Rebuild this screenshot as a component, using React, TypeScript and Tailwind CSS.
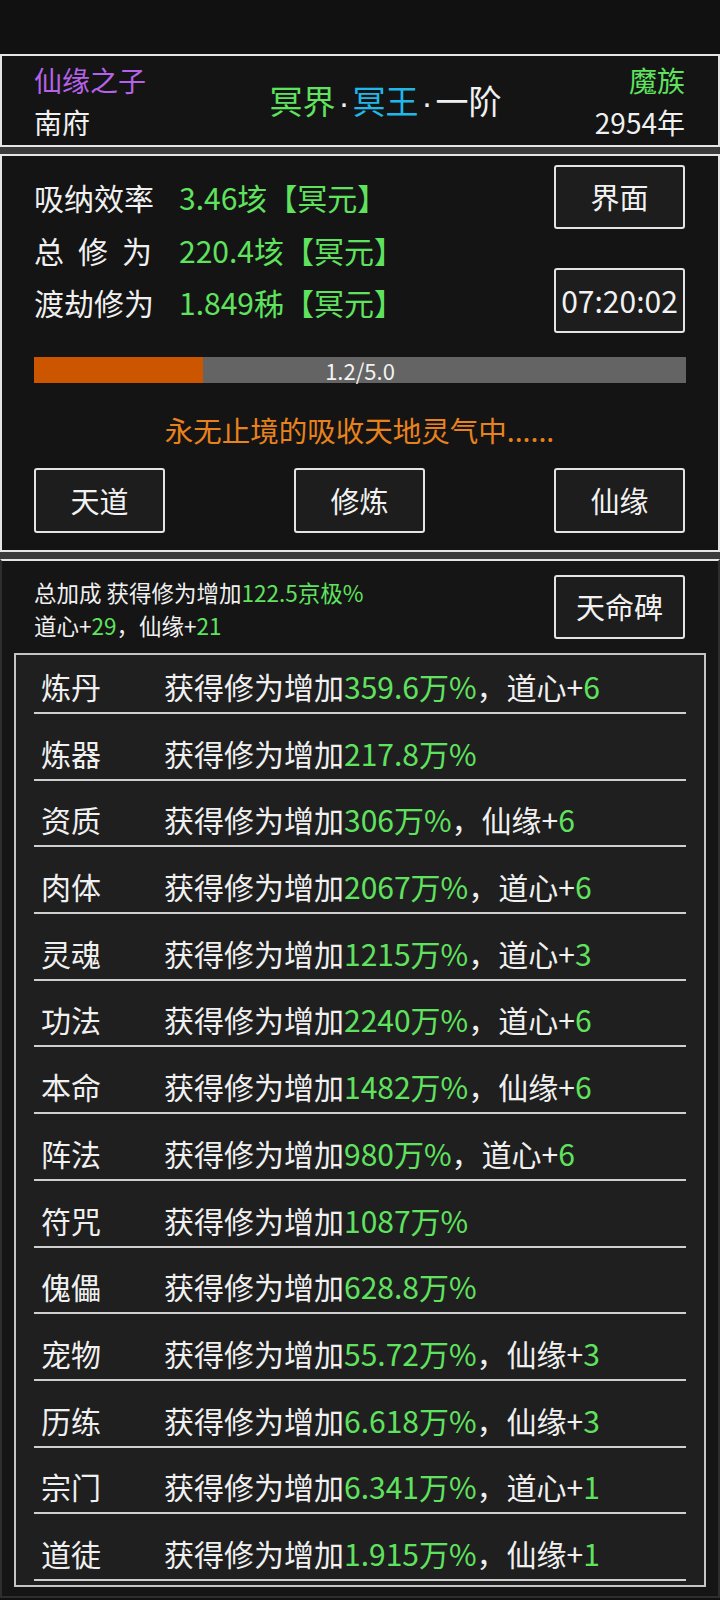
import React from "react";

const G = "text-[#5fe35f]";

type Row = { k: string; v: string; tail?: string; n?: string };

const rows: Row[] = [
  { k: "炼丹", v: "359.6万%", tail: "，道心+", n: "6" },
  { k: "炼器", v: "217.8万%" },
  { k: "资质", v: "306万%", tail: "，仙缘+", n: "6" },
  { k: "肉体", v: "2067万%", tail: "，道心+", n: "6" },
  { k: "灵魂", v: "1215万%", tail: "，道心+", n: "3" },
  { k: "功法", v: "2240万%", tail: "，道心+", n: "6" },
  { k: "本命", v: "1482万%", tail: "，仙缘+", n: "6" },
  { k: "阵法", v: "980万%", tail: "，道心+", n: "6" },
  { k: "符咒", v: "1087万%" },
  { k: "傀儡", v: "628.8万%" },
  { k: "宠物", v: "55.72万%", tail: "，仙缘+", n: "3" },
  { k: "历练", v: "6.618万%", tail: "，仙缘+", n: "3" },
  { k: "宗门", v: "6.341万%", tail: "，道心+", n: "1" },
  { k: "道徒", v: "1.915万%", tail: "，仙缘+", n: "1" },
];

function Btn({ children, className = "" }: { children: React.ReactNode; className?: string }) {
  return (
    <div
      className={
        "w-[131px] shrink-0 flex items-center justify-center border-2 border-[#e4e4e4] rounded-[3px] bg-[#1d1d1d] text-[#f2f2f2] " +
        className
      }
    >
      {children}
    </div>
  );
}

function Dot() {
  return <span className="font-['Liberation_Sans',sans-serif] mx-[3px]">·</span>;
}

export default function App() {
  return (
    <div className="w-[720px] h-[1600px] bg-[#111111] text-[#f0f0f0] font-['Noto_Sans_CJK_SC','Noto_Sans',sans-serif] overflow-hidden">
      <div className="h-[54px] bg-[#111111]" />

      {/* Panel 1 */}
      <div className="border-2 border-[#e6e6e6] bg-[#141414] pl-[32px] pr-[33px] pt-[3px] pb-[2px] flex items-center">
        <div className="w-[150px] shrink-0 text-[28px] leading-[42px]">
          <div className="text-[#b562e8]">仙缘之子</div>
          <div>南府</div>
        </div>
        <div className="flex-1 pl-[52px] text-center text-[33px] leading-[42px] whitespace-nowrap">
          <span className="text-[#5fe35f]">冥界</span>
          <Dot />
          <span className="text-[#21b8e8]">冥王</span>
          <Dot />
          <span>一阶</span>
        </div>
        <div className="w-[150px] shrink-0 text-[28px] leading-[42px] text-right">
          <div className="text-[#5fe35f]">魔族</div>
          <div>2954年</div>
        </div>
      </div>

      <div className="h-[7px] bg-[#3b3b3b]" />

      {/* Panel 2 */}
      <div className="border-2 border-[#e6e6e6] bg-[#141414] pl-[32px] pr-[33px] pb-[17px]">
        <div className="h-[177px] flex justify-between">
          <div className="mt-[15px] text-[30px] leading-[52.5px]">
            <div className="flex">
              <span className="w-[145px]">吸纳效率</span>
              <span className={G}>3.46垓【冥元】</span>
            </div>
            <div className="flex">
              <span className="w-[145px]">
                <span className="w-[118px] flex justify-between">
                  <span>总</span>
                  <span>修</span>
                  <span>为</span>
                </span>
              </span>
              <span className={G}>220.4垓【冥元】</span>
            </div>
            <div className="flex">
              <span className="w-[145px]">渡劫修为</span>
              <span className={G}>1.849秭【冥元】</span>
            </div>
          </div>
          <div className="mt-[9px] flex flex-col">
            <Btn className="h-[64px] text-[29px]">界面</Btn>
            <Btn className="h-[65px] mt-[39px] text-[30px]">07:20:02</Btn>
          </div>
        </div>

        <div className="mt-[24px] h-[26px] w-[652px] bg-[#646464] flex">
          <div className="w-[169px] h-full bg-[#cc5500] shrink-0" />
          <div className="-ml-[169px] w-[652px] text-center text-[22px] leading-[26px] text-[#f2f2f2]">1.2/5.0</div>
        </div>

        <div className="mt-[29px] h-[36px] text-center text-[28.5px] leading-[36px] text-[#e8821c]">
          永无止境的吸收天地灵气中......
        </div>

        <div className="mt-[20px] flex justify-between">
          <Btn className="h-[65px] text-[29px]">天道</Btn>
          <Btn className="h-[65px] text-[29px]">修炼</Btn>
          <Btn className="h-[65px] text-[29px]">仙缘</Btn>
        </div>
      </div>

      <div className="h-[7px] bg-[#3b3b3b]" />

      {/* Panel 3 */}
      <div className="border-2 border-t-[#e6e6e6] border-x-[#2e2e2e] border-b-[#2e2e2e] bg-[#151515] pb-[9px]">
        <div className="h-[78px] pl-[32px] pr-[33px] pt-[14px] flex justify-between items-start">
          <div className="mt-[1px] text-[22.5px] leading-[33px]">
            <div>
              总加成 获得修为增加<span className={G}>122.5京极%</span>
            </div>
            <div>
              道心+<span className={G}>29</span>，仙缘+<span className={G}>21</span>
            </div>
          </div>
          <Btn className="h-[64px] text-[29px]">天命碑</Btn>
        </div>

        <div className="mt-[14px] mx-[12px] border-2 border-[#c4c4c4] bg-[#1f1f1f] px-[18px] pb-[4px]">
          {rows.map((r) => (
            <div
              key={r.k}
              className="pt-[18.7px] first:pt-[11px] pb-[6px] border-b-2 border-[#cfcfcf] flex text-[30px] leading-[40px]"
            >
              <span className="w-[130px] pl-[7px]">{r.k}</span>
              <span>
                获得修为增加<span className={G}>{r.v}</span>
                {r.tail && (
                  <>
                    {r.tail}
                    <span className={G}>{r.n}</span>
                  </>
                )}
              </span>
            </div>
          ))}
        </div>
      </div>
    </div>
  );
}
